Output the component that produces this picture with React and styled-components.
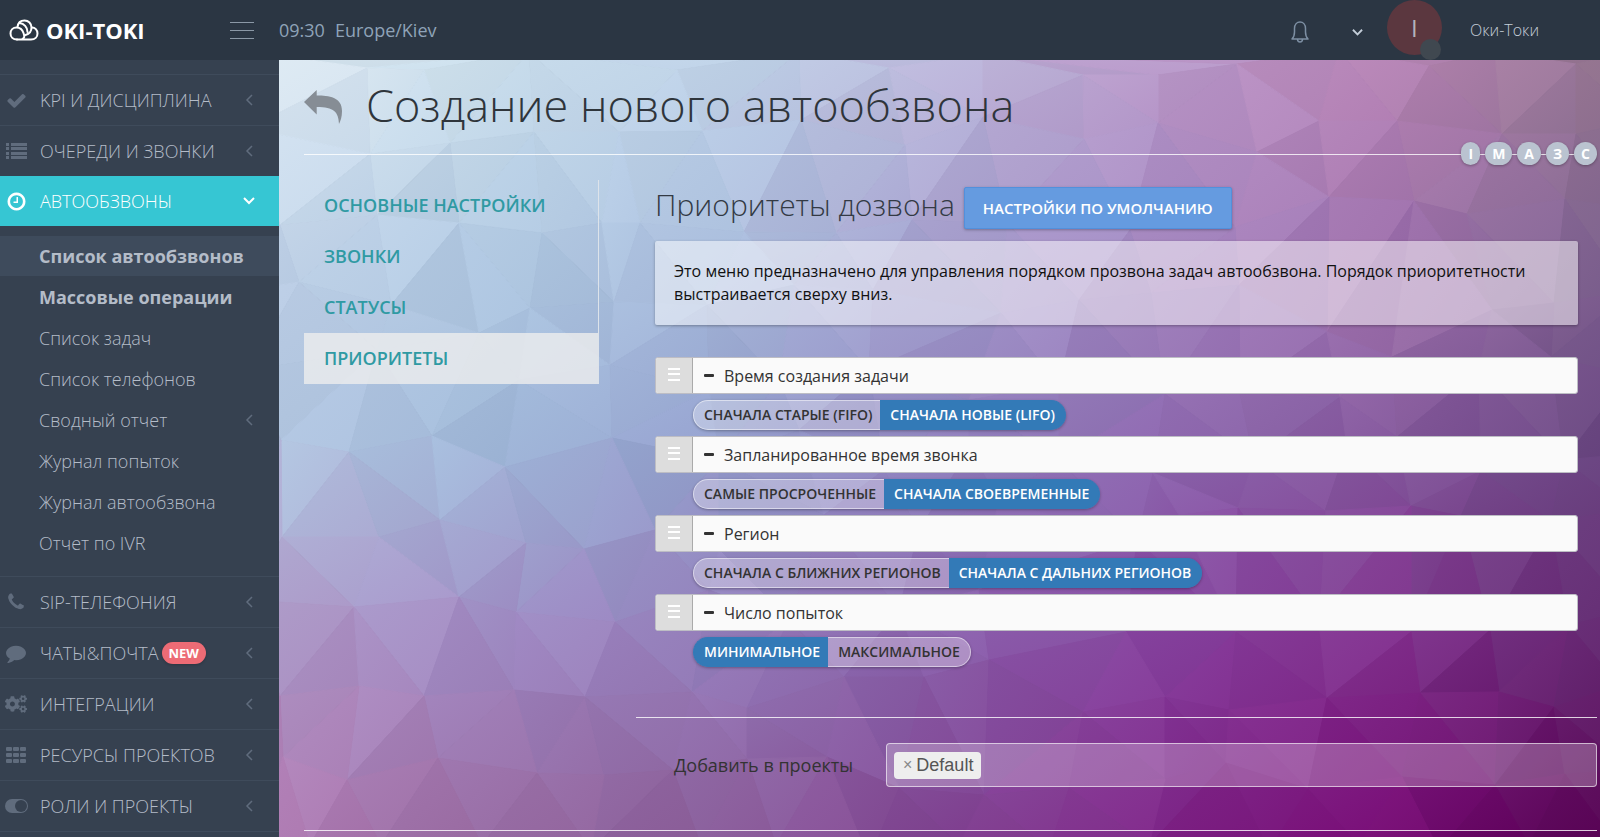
import { useState } from "react";
import styled, { createGlobalStyle } from "styled-components";
import { FaCogs } from "react-icons/fa";

const GlobalStyle = createGlobalStyle`
  * {
    box-sizing: border-box;
  }
  body {
    margin: 0;
    background: #364150;
    font-family: "Open Sans", "Noto Sans", sans-serif;
  }
  button {
    font-family: inherit;
    cursor: pointer;
  }
`;

/* ---------- polygonal background ---------- */

const W = 1321;
const H = 777;

// colours on a 7 x 5 grid, each triangle is filled from the blend around its centre
const colorGrid = [
  ["dde9f1", "cbdfec", "c1d4e9", "bdb9db", "b998c8", "ba86b7", "957690"],
  ["bfd1e7", "b0c8e1", "abbfde", "a6a1cf", "a486c0", "a272ae", "7f6490"],
  ["b1c4df", "9fb8d9", "929ecc", "8f80bd", "8c68ae", "865a9f", "684580"],
  ["b096c7", "9f88c2", "947cba", "8a62ac", "87419f", "81308d", "652a72"],
  ["b07ab2", "96689f", "8c5e9a", "804290", "7f2587", "790a75", "540050"],
].map((row) => row.map((hex) => [0, 2, 4].map((i) => parseInt(hex.slice(i, i + 2), 16))));

const meshRows = [
  [-40, -10, 88, 8, 145, 10, 250, -8, 398, 10, 520, -8, 610, 8, 704, -6, 804, 15, 879, 15, 958, 4, 1060, -10, 1150, 6, 1216, -8, 1297, 4, 1360, -10],
  [-30, 68, 91, 94, 171, 83, 255, 72, 340, 72, 423, 71, 522, 60, 626, 85, 704, 57, 805, 79, 879, 63, 978, 92, 1040, 61, 1118, 61, 1223, 74, 1297, 74, 1360, 60],
  [1, 165, 98, 155, 180, 163, 263, 173, 323, 163, 361, 163, 465, 172, 557, 173, 633, 160, 728, 163, 851, 170, 956, 167, 1050, 137, 1135, 141, 1188, 154, 1286, 139, 1360, 150],
  [-30, 230, 20, 222, 112, 245, 251, 248, 335, 242, 428, 245, 515, 225, 594, 230, 722, 253, 800, 240, 872, 233, 960, 225, 1048, 272, 1213, 250, 1275, 243, 1350, 232],
  [-30, 310, 98, 290, 200, 273, 240, 320, 331, 305, 430, 330, 500, 320, 590, 310, 690, 340, 780, 325, 886, 334, 961, 334, 1061, 337, 1113, 297, 1200, 310, 1272, 297, 1350, 315],
  [2, 380, 70, 392, 153, 376, 226, 407, 333, 378, 440, 400, 520, 370, 605, 410, 690, 390, 780, 400, 874, 413, 975, 400, 1068, 386, 1118, 377, 1202, 411, 1285, 400, 1350, 394],
  [3, 477, 100, 477, 161, 460, 247, 483, 305, 489, 376, 470, 440, 490, 545, 455, 640, 470, 720, 440, 858, 480, 900, 455, 959, 448, 1046, 451, 1132, 446, 1182, 456, 1272, 461, 1350, 450],
  [-30, 540, 75, 547, 180, 537, 237, 552, 336, 562, 430, 530, 510, 560, 620, 550, 700, 530, 847, 572, 957, 572, 1040, 560, 1132, 572, 1211, 570, 1290, 565, 1350, 550],
  [1, 636, 80, 626, 145, 636, 235, 630, 306, 637, 413, 632, 468, 648, 565, 617, 645, 617, 710, 600, 804, 652, 886, 637, 950, 650, 1048, 638, 1141, 633, 1220, 632, 1275, 647, 1340, 625],
  [4, 697, 68, 720, 159, 698, 258, 713, 325, 715, 394, 710, 468, 699, 548, 697, 620, 728, 705, 735, 790, 728, 886, 719, 947, 703, 1029, 729, 1123, 717, 1216, 725, 1286, 714, 1350, 710],
  [-30, 800, 31, 785, 102, 785, 203, 785, 312, 790, 422, 785, 497, 785, 590, 800, 680, 785, 770, 790, 870, 785, 990, 790, 1080, 785, 1160, 790, 1250, 785, 1350, 800],
];

const points = meshRows.flatMap((row) => row.filter((_, i) => i % 2 === 0).map((x, i) => [x, row[i * 2 + 1]]));

const circumcircle = (pts, [i, j, k]) => {
  const [ax, ay] = pts[i];
  const [bx, by] = pts[j];
  const [cx, cy] = pts[k];
  const d = 2 * (ax * (by - cy) + bx * (cy - ay) + cx * (ay - by));
  const a = ax * ax + ay * ay;
  const b = bx * bx + by * by;
  const c = cx * cx + cy * cy;
  const x = (a * (by - cy) + b * (cy - ay) + c * (ay - by)) / d;
  const y = (a * (cx - bx) + b * (ax - cx) + c * (bx - ax)) / d;
  return { ids: [i, j, k], x, y, r: (ax - x) ** 2 + (ay - y) ** 2 };
};

const triangulate = (source) => {
  const n = source.length;
  const pts = [...source, [-9000, -9000], [10000, -9000], [600, 12000]];
  let triangles = [circumcircle(pts, [n, n + 1, n + 2])];
  for (let p = 0; p < n; p++) {
    const [px, py] = pts[p];
    const edges = new Map();
    triangles = triangles.filter((t) => {
      if ((t.x - px) ** 2 + (t.y - py) ** 2 >= t.r) return true;
      const [i, j, k] = t.ids;
      [[i, j], [j, k], [k, i]].forEach((edge) => {
        const key = [...edge].sort((a, b) => a - b).join("-");
        edges.has(key) ? edges.delete(key) : edges.set(key, edge);
      });
      return false;
    });
    edges.forEach(([i, j]) => triangles.push(circumcircle(pts, [i, j, p])));
  }
  return triangles.filter((t) => t.ids.every((id) => id < n)).map((t) => t.ids.map((id) => pts[id]));
};

const colorAt = (x, y, shade) => {
  const gx = Math.min(Math.max(x / W, 0), 1) * 6;
  const gy = Math.min(Math.max(y / H, 0), 1) * 4;
  const cx = Math.min(Math.floor(gx), 5);
  const cy = Math.min(Math.floor(gy), 3);
  const mix = (a, b, t) => a + (b - a) * t;
  const rgb = [0, 1, 2].map((i) => {
    const top = mix(colorGrid[cy][cx][i], colorGrid[cy][cx + 1][i], gx - cx);
    const bottom = mix(colorGrid[cy + 1][cx][i], colorGrid[cy + 1][cx + 1][i], gx - cx);
    return Math.round(mix(top, bottom, gy - cy) + shade);
  });
  return `rgb(${rgb.join(",")})`;
};

const facets = triangulate(points).map((t, index) => {
  const x = (t[0][0] + t[1][0] + t[2][0]) / 3;
  const y = (t[0][1] + t[1][1] + t[2][1]) / 3;
  const shade = ((index * 7) % 9) - 4;
  return {
    id: `facet-${index}`,
    path: t.map((p) => p.join(",")).join(" "),
    from: colorAt(x - 28, y - 28, shade),
    to: colorAt(x + 28, y + 28, shade),
  };
});

const Backdrop = () => (
  <BackdropSvg viewBox={`0 0 ${W} ${H}`} preserveAspectRatio="none" aria-hidden="true">
    {facets.map((f) => (
      <g key={f.id}>
        <linearGradient id={f.id} x1="0" y1="0" x2="1" y2="1">
          <stop offset="0" stopColor={f.from} />
          <stop offset="1" stopColor={f.to} />
        </linearGradient>
        <polygon points={f.path} fill={`url(#${f.id})`} stroke={`url(#${f.id})`} strokeWidth="1" />
      </g>
    ))}
  </BackdropSvg>
);

/* ---------- icons ---------- */

const CloudLogo = () => (
  <svg width="30" height="23" viewBox="0 0 30 23" fill="none" stroke="#fff" strokeWidth="2" strokeLinecap="round">
    <path d="M8 20.500C4 20.500 1.500 18 1.500 14.500C1.500 11 4 8.500 7.500 8.500C11 8.500 13.500 11 14.500 14C15.500 17 16 18.500 13.500 20" />
    <path d="M8 20.500H22C26 20.500 28.500 18 28.500 14.500C28.500 11 26 8.500 23 8.500" />
    <path d="M8.500 8C9 4 11.500 1.500 15.500 1.500C19.500 1.500 22.500 4.500 22.500 8.500C22.500 12.500 20 15 16.500 16" />
    <path d="M10.500 4C15 4.500 18.500 8 18.500 13" />
  </svg>
);

const CheckIcon = () => (
  <svg width="21" height="21" viewBox="0 0 1792 1792" fill="currentColor">
    <path d="M1671 566q0 40-28 68l-724 724-136 136q-28 28-68 28t-68-28l-136-136-362-362q-28-28-28-68t28-68l136-136q28-28 68-28t68 28l294 295 656-657q28-28 68-28t68 28l136 136q28 28 28 68z" />
  </svg>
);

const ListIcon = () => (
  <svg width="21" height="16" viewBox="0 0 21 16" fill="currentColor">
    {[0, 4, 9, 13].map((y) => (
      <g key={y}>
        <rect x="0" y={y} width="3" height="3" />
        <rect x="5" y={y} width="16" height="3" />
      </g>
    ))}
  </svg>
);

const ClockIcon = () => (
  <svg width="21" height="21" viewBox="0 0 1792 1792" fill="currentColor">
    <path d="M1024 544v448q0 14-9 23t-23 9h-320q-14 0-23-9t-9-23v-64q0-14 9-23t23-9h224v-352q0-14 9-23t23-9h64q14 0 23 9t9 23zm416 352q0-148-73-273t-198-198-273-73-273 73-198 198-73 273 73 273 198 198 273 73 273-73 198-198 73-273zm224 0q0 209-103 385.500t-279.500 279.500-385.500 103-385.500-103-279.500-279.500-103-385.500 103-385.500 279.500-279.500 385.500-103 385.500 103 279.500 279.500 103 385.500z" />
  </svg>
);

const PhoneIcon = () => (
  <svg width="20" height="20" viewBox="0 0 1792 1792" fill="currentColor">
    <path d="M1600 1240q0 27-10 70.500t-21 68.500q-21 50-122 106-94 51-186 51-27 0-53-3.500t-57.500-12.500-47-14.500-55.500-20.500-49-18q-98-35-175-83-127-79-264-216t-216-264q-48-77-83-175-3-9-18-49t-20.500-55.500-14.500-47-12.500-57.500-3.500-53q0-92 51-186 56-101 106-122 25-11 68.500-21t70.500-10q14 0 21 3 18 6 53 76 11 19 30 54t35 63.500 31 53.500q3 4 17.500 25t21.500 35.500 7 28.500q0 20-28.500 50t-62 55-62 53-28.500 46q0 9 5 22.500t8.500 20.500 14 24 11.500 19q76 137 174 235t235 174q2 1 19 11.500t24 14 20.500 8.500 22.500 5q18 0 46-28.500t53-62 55-62 50-28.500q14 0 28.500 7t35.500 21.500 25 17.500q25 15 53.500 31t63.500 35 54 30q70 35 76 53 3 7 3 21z" />
  </svg>
);

const CommentIcon = () => (
  <svg width="20" height="20" viewBox="0 0 1792 1792" fill="currentColor">
    <path d="M1792 896q0 174-120 321.500t-326 233-450 85.500q-70 0-145-8-198 175-460 242-49 14-114 22-17 2-30.500-9t-17.500-29v-1q-3-4-.5-12t2-10 4.500-9.500l6-9 7-8.500 8-9q7-8 31-34.500t34.500-38 31-39.500 32.500-51 27-59 26-76q-157-89-247.500-220t-90.500-281q0-174 120-321.500t326-233 450-85.500 450 85.500 326 233 120 321.500z" />
  </svg>
);

const GridIcon = () => (
  <svg width="20" height="16" viewBox="0 0 20 16" fill="currentColor">
    {[0, 6, 12].map((y) => [0, 7, 14].map((x) => <rect key={`${x}-${y}`} x={x} y={y} width="6" height="4" rx="1" />))}
  </svg>
);

const ToggleIcon = () => (
  <svg width="23" height="14" viewBox="0 0 23 14">
    <rect width="23" height="14" rx="7" fill="currentColor" />
    <circle cx="16" cy="7" r="6" fill="#364150" />
  </svg>
);

const Chevron = ({ down, size = 12 }) => (
  <svg width={size} height={size} viewBox="0 0 12 12" fill="none" stroke="currentColor" strokeWidth={down ? 2 : 1.5}>
    <path d={down ? "M1 3L6 8L11 3" : "M9 1L4 6L9 11"} />
  </svg>
);

const BellIcon = () => (
  <svg width="18" height="22" viewBox="0 0 18 22" fill="none" stroke="#7d8fa3" strokeWidth="1.5" strokeLinejoin="round">
    <path d="M1 18C3 16 3.500 14 3.500 11V7.500C3.500 3.500 6 1 9 1C12 1 14.500 3.500 14.500 7.500V11C14.500 14 15 16 17 18Z" />
    <path d="M6.500 18C6.500 20 7.500 21 9 21C10.500 21 11.500 20 11.500 18" />
  </svg>
);

const ReplyIcon = () => (
  <svg width="38" height="34" viewBox="0 0 38 34" fill="#868d95">
    <path d="M0 12L12.700 0V5.500C25 5.500 38 7 38 21C38 27 36.500 31 35 34C34.500 22 30 17 12.700 17V24.500Z" />
  </svg>
);

const GripIcon = () => (
  <svg width="12" height="13" viewBox="0 0 12 13" fill="#fff">
    <rect width="12" height="2" />
    <rect y="5" width="12" height="2" />
    <rect y="11" width="12" height="2" />
  </svg>
);

/* ---------- data ---------- */

const topMenu = [
  { label: "KPI И ДИСЦИПЛИНА", icon: <CheckIcon /> },
  { label: "ОЧЕРЕДИ И ЗВОНКИ", icon: <ListIcon /> },
  { label: "АВТООБЗВОНЫ", icon: <ClockIcon />, active: true },
];

const subMenu = [
  { label: "Список автообзвонов", bold: true, active: true },
  { label: "Массовые операции", bold: true },
  { label: "Список задач" },
  { label: "Список телефонов" },
  { label: "Сводный отчет", nested: true },
  { label: "Журнал попыток" },
  { label: "Журнал автообзвона" },
  { label: "Отчет по IVR" },
];

const bottomMenu = [
  { label: "SIP-ТЕЛЕФОНИЯ", icon: <PhoneIcon /> },
  { label: "ЧАТЫ&ПОЧТА", icon: <CommentIcon />, badge: "NEW" },
  { label: "ИНТЕГРАЦИИ", icon: <FaCogs size={22} /> },
  { label: "РЕСУРСЫ ПРОЕКТОВ", icon: <GridIcon /> },
  { label: "РОЛИ И ПРОЕКТЫ", icon: <ToggleIcon /> },
];

const tabs = ["ОСНОВНЫЕ НАСТРОЙКИ", "ЗВОНКИ", "СТАТУСЫ", "ПРИОРИТЕТЫ"];

const priorities = [
  { title: "Время создания задачи", options: ["СНАЧАЛА СТАРЫЕ (FIFO)", "СНАЧАЛА НОВЫЕ (LIFO)"], value: 1 },
  { title: "Запланированное время звонка", options: ["САМЫЕ ПРОСРОЧЕННЫЕ", "СНАЧАЛА СВОЕВРЕМЕННЫЕ"], value: 1 },
  { title: "Регион", options: ["СНАЧАЛА С БЛИЖНИХ РЕГИОНОВ", "СНАЧАЛА С ДАЛЬНИХ РЕГИОНОВ"], value: 1 },
  { title: "Число попыток", options: ["МИНИМАЛЬНОЕ", "МАКСИМАЛЬНОЕ"], value: 0 },
];

/* ---------- parts ---------- */

const MenuEntry = ({ item }) => (
  <MenuItem $active={item.active}>
    <MenuLink href="#" $active={item.active}>
      <MenuIcon $active={item.active}>{item.icon}</MenuIcon>
      {item.label}
      {item.badge && <NewBadge>{item.badge}</NewBadge>}
      <MenuArrow $active={item.active}>
        <Chevron down={item.active} />
      </MenuArrow>
    </MenuLink>
  </MenuItem>
);

const Priority = ({ item }) => {
  const [value, setValue] = useState(item.value);
  return (
    <PriorityItem>
      <PriorityBar>
        <Grip type="button" aria-label="Переместить">
          <GripIcon />
        </Grip>
        <PriorityTitle>
          <Minus />
          {item.title}
        </PriorityTitle>
      </PriorityBar>
      <Switcher>
        {item.options.map((option, i) => (
          <SwitchButton key={option} type="button" $active={i === value} aria-pressed={i === value} onClick={() => setValue(i)}>
            {option}
          </SwitchButton>
        ))}
      </Switcher>
    </PriorityItem>
  );
};

export default function App() {
  const [selectedTab, setSelectedTab] = useState("ПРИОРИТЕТЫ");
  const [projects, setProjects] = useState(["Default"]);

  return (
    <Page>
      <GlobalStyle />
      <Header>
        <Brand>
          <Logo href="#">
            <CloudLogo />
            OKI-TOKI
          </Logo>
          <MenuToggle type="button" aria-label="Меню">
            <span />
            <span />
            <span />
          </MenuToggle>
        </Brand>
        <Clock>
          <span>09:30</span>
          <span>Europe/Kiev</span>
        </Clock>
        <UserBar>
          <IconButton type="button" aria-label="Уведомления">
            <BellIcon />
          </IconButton>
          <IconButton type="button" aria-label="Открыть список">
            <Chevron down size={11} />
          </IconButton>
          <Avatar>
            I
            <Status />
          </Avatar>
          <UserName>Оки-Токи</UserName>
        </UserBar>
      </Header>
      <Body>
        <Sidebar>
          <MenuList>
            {topMenu.map((item) => (
              <MenuEntry key={item.label} item={item} />
            ))}
          </MenuList>
          <SubMenu>
            {subMenu.map((item) => (
              <li key={item.label}>
                <SubLink href="#" $bold={item.bold} $active={item.active}>
                  {item.label}
                  {item.nested && (
                    <MenuArrow>
                      <Chevron />
                    </MenuArrow>
                  )}
                </SubLink>
              </li>
            ))}
          </SubMenu>
          <MenuList $last>
            {bottomMenu.map((item) => (
              <MenuEntry key={item.label} item={item} />
            ))}
          </MenuList>
        </Sidebar>
        <Main>
          <Backdrop />
          <TitleBar>
            <BackLink href="#" aria-label="Назад">
              <ReplyIcon />
            </BackLink>
            <Title>Создание нового автообзвона</Title>
            <Letters>
              {["I", "М", "А", "З", "С"].map((letter) => (
                <Letter key={letter}>{letter}</Letter>
              ))}
            </Letters>
          </TitleBar>
          <Content>
            <Tabs>
              {tabs.map((tab) => (
                <Tab key={tab} type="button" $active={tab === selectedTab} onClick={() => setSelectedTab(tab)}>
                  {tab}
                </Tab>
              ))}
            </Tabs>
            <Panel>
              <Settings>
                <PanelHead>
                  <PanelTitle>Приоритеты дозвона</PanelTitle>
                  <DefaultsButton type="button">НАСТРОЙКИ ПО УМОЛЧАНИЮ</DefaultsButton>
                </PanelHead>
                <Note>Это меню предназначено для управления порядком прозвона задач автообзвона. Порядок приоритетности выстраивается сверху вниз.</Note>
                <PriorityList>
                  {priorities.map((item) => (
                    <Priority key={item.title} item={item} />
                  ))}
                </PriorityList>
              </Settings>
              <ProjectRow>
                <ProjectLabel htmlFor="projects">Добавить в проекты</ProjectLabel>
                <TagBox>
                  {projects.map((project) => (
                    <Tag key={project}>
                      <TagRemove type="button" aria-label={`Убрать ${project}`} onClick={() => setProjects(projects.filter((p) => p !== project))}>
                        ×
                      </TagRemove>
                      {project}
                    </Tag>
                  ))}
                  <TagInput id="projects" type="text" />
                </TagBox>
              </ProjectRow>
            </Panel>
          </Content>
        </Main>
      </Body>
    </Page>
  );
}

/* ---------- styles ---------- */

const Page = styled.div`
  display: flex;
  flex-direction: column;
  min-height: 100vh;
`;

const Header = styled.header`
  display: flex;
  align-items: center;
  height: 60px;
  background: #2b3643;
`;

const Brand = styled.div`
  display: flex;
  align-items: center;
  justify-content: space-between;
  width: 279px;
  padding: 0 25px 0 9px;
`;

const Logo = styled.a`
  display: flex;
  align-items: center;
  gap: 7px;
  color: #fff;
  font-size: 22px;
  font-weight: 700;
  text-decoration: none;
`;

const MenuToggle = styled.button`
  display: flex;
  flex-direction: column;
  gap: 7px;
  padding: 0;
  border: 0;
  background: none;
  span {
    width: 24px;
    height: 1px;
    background: #8b98a6;
  }
`;

const Clock = styled.div`
  display: flex;
  gap: 10px;
  flex: 1;
  color: #8fa3b8;
  font-size: 18px;
`;

const UserBar = styled.div`
  display: flex;
  align-items: center;
  height: 60px;
  padding-right: 61px;
`;

const IconButton = styled.button`
  display: flex;
  align-items: center;
  justify-content: center;
  width: 58px;
  height: 60px;
  padding: 4px 0 0;
  border: 0;
  background: none;
  color: #c3cdd8;
`;

const Avatar = styled.div`
  position: relative;
  align-self: flex-start;
  width: 55px;
  height: 55px;
  border-radius: 50%;
  background: #5b373f;
  color: #b3b3bd;
  font-size: 24px;
  line-height: 55px;
  text-align: center;
`;

const Status = styled.span`
  position: absolute;
  right: 1px;
  bottom: -5px;
  width: 21px;
  height: 21px;
  border-radius: 50%;
  background: #404850;
`;

const UserName = styled.span`
  margin-left: 28px;
  color: #c6cfda;
  font-size: 16px;
  font-weight: 300;
`;

const Body = styled.div`
  display: flex;
  flex: 1;
`;

const Sidebar = styled.nav`
  flex: 0 0 279px;
  padding-top: 14px;
  background: #364150;
  color: #b4bcc8;
`;

const MenuList = styled.ul`
  margin: 0;
  padding: 0;
  list-style: none;
  border-bottom: ${(props) => (props.$last ? "1px solid #3f4b5b" : "0")};
`;

const MenuItem = styled.li`
  border-top: ${(props) => (props.$active ? "0" : "1px solid #3f4b5b")};
`;

const MenuLink = styled.a`
  display: flex;
  align-items: center;
  height: 50px;
  padding: 0 24px 0 4px;
  background: ${(props) => (props.$active ? "#36c6d3" : "none")};
  color: ${(props) => (props.$active ? "#fff" : "#b4bcc8")};
  font-size: 18px;
  font-weight: 300;
  text-decoration: none;
`;

const MenuIcon = styled.span`
  display: flex;
  justify-content: center;
  width: 24px;
  margin-right: 12px;
  color: ${(props) => (props.$active ? "#fff" : "#606c7d")};
  svg {
    flex: none;
  }
`;

const MenuArrow = styled.span`
  display: flex;
  margin-left: auto;
  color: ${(props) => (props.$active ? "#fff" : "#606c7d")};
`;

const NewBadge = styled.span`
  height: 22px;
  margin-left: 3px;
  padding: 0 7px;
  border-radius: 11px;
  background: #ed6b75;
  color: #fff;
  font-size: 13px;
  font-weight: 700;
  line-height: 22px;
  box-shadow: 0 1px 3px rgba(0, 0, 0, 0.2);
`;

const SubMenu = styled.ul`
  display: grid;
  gap: 1px;
  margin: 0;
  padding: 10px 0 13px;
  list-style: none;
`;

const SubLink = styled.a`
  display: flex;
  align-items: center;
  height: 40px;
  padding: 0 24px 0 39px;
  background: ${(props) => (props.$active ? "#3e4b5c" : "none")};
  color: #b4bcc8;
  font-size: 18px;
  font-weight: ${(props) => (props.$bold ? 700 : 300)};
  text-decoration: none;
`;

const Main = styled.main`
  position: relative;
  z-index: 0;
  flex: 1;
  min-width: 0;
  padding: 0 3px 6px 25px;
  overflow: hidden;
`;

const BackdropSvg = styled.svg`
  position: absolute;
  inset: 0;
  z-index: -1;
  width: 100%;
  height: 100%;
`;

const TitleBar = styled.div`
  position: relative;
  display: flex;
  align-items: center;
  gap: 24px;
  height: 95px;
  border-bottom: 1px solid rgba(255, 255, 255, 0.8);
`;

const BackLink = styled.a`
  display: flex;
`;

const Title = styled.h1`
  margin: 0;
  padding-bottom: 4px;
  color: #2f353b;
  font-size: 45px;
  font-weight: 300;
  line-height: 60px;
`;

const Letters = styled.div`
  position: absolute;
  right: 0;
  bottom: -11px;
  display: flex;
  gap: 5px;
`;

const Letter = styled.span`
  padding: 0 7px;
  border-radius: 12px;
  background: #bac3d0;
  color: #fff;
  font-size: 14px;
  font-weight: 700;
  line-height: 23px;
  box-shadow: 0 1px 3px rgba(0, 0, 0, 0.3);
`;

const Content = styled.div`
  display: flex;
  align-items: flex-start;
  gap: 37px;
  padding-top: 25px;
  border-bottom: 1px solid rgba(255, 255, 255, 0.8);
`;

const Tabs = styled.div`
  display: flex;
  flex-direction: column;
  flex: 0 0 295px;
  border-right: 1px solid #dde3ea;
`;

const Tab = styled.button`
  height: 51px;
  padding: 0 20px 1px;
  border: 0;
  background: ${(props) => (props.$active ? "rgba(238, 238, 238, 0.8)" : "none")};
  color: #2f9aa3;
  font-size: 18px;
  font-weight: 600;
  text-align: left;
`;

const Panel = styled.section`
  flex: 1;
  min-width: 0;
`;

const Settings = styled.div`
  padding: 7px 19px 50px;
  border-bottom: 1px solid rgba(255, 255, 255, 0.8);
`;

const PanelHead = styled.div`
  display: flex;
  align-items: flex-start;
  gap: 9px;
`;

const PanelTitle = styled.h2`
  margin: 0;
  color: #333a44;
  font-size: 30px;
  font-weight: 300;
  line-height: 36px;
`;

const DefaultsButton = styled.button`
  height: 42px;
  padding: 0 18px;
  border: 1px solid #5290dc;
  border-radius: 2px;
  background: #659be0;
  color: #fff;
  font-size: 15px;
  font-weight: 600;
  box-shadow: 0 1px 3px rgba(0, 0, 0, 0.3);
`;

const Note = styled.p`
  margin: 12px 0 32px;
  padding: 19px 19px;
  border-radius: 2px;
  background: rgba(255, 255, 255, 0.5);
  color: #111;
  font-size: 16px;
  line-height: 23px;
  box-shadow: 0 1px 3px rgba(0, 0, 0, 0.3);
`;

const PriorityList = styled.ul`
  display: grid;
  gap: 6px;
  margin: 0;
  padding: 0;
  list-style: none;
`;

const PriorityItem = styled.li`
  display: flex;
  flex-direction: column;
  align-items: flex-start;
  gap: 6px;
`;

const PriorityBar = styled.div`
  display: flex;
  width: 100%;
  height: 37px;
  border: 1px solid #bdbdc4;
  border-radius: 3px;
  background: #fafafa;
`;

const Grip = styled.button`
  display: flex;
  align-items: center;
  justify-content: center;
  width: 37px;
  padding: 0 0 2px;
  border: 0;
  border-right: 1px solid #aaa;
  border-radius: 2px 0 0 2px;
  background: #ddd;
`;

const PriorityTitle = styled.div`
  display: flex;
  align-items: center;
  gap: 10px;
  padding-left: 11px;
  color: #333;
  font-size: 16px;
`;

const Minus = styled.span`
  width: 10px;
  height: 3px;
  border-radius: 1px;
  background: #333;
`;

const Switcher = styled.div`
  display: flex;
  margin-left: 38px;
  border-radius: 15px;
  box-shadow: 0 1px 3px rgba(0, 0, 0, 0.3);
`;

const SwitchButton = styled.button`
  height: 30px;
  padding: 0 10px 1px;
  border: 1px solid ${(props) => (props.$active ? "#337ab7" : "rgba(255, 255, 255, 0.5)")};
  background: ${(props) => (props.$active ? "#337ab7" : "rgba(255, 255, 255, 0.3)")};
  color: ${(props) => (props.$active ? "#fff" : "#333")};
  font-size: 14px;
  font-weight: 600;
  &:first-child {
    padding-right: 8px;
    border-right: 0;
    border-radius: 15px 0 0 15px;
  }
  &:last-child {
    border-left: 0;
    border-radius: 0 15px 15px 0;
  }
`;

const ProjectRow = styled.div`
  display: flex;
  align-items: center;
  padding: 25px 0 43px 38px;
`;

const ProjectLabel = styled.label`
  width: 212px;
  color: #333;
  font-size: 18px;
`;

const TagBox = styled.div`
  display: flex;
  align-items: center;
  flex: 1;
  height: 44px;
  padding: 0 7px;
  border: 1px solid rgba(255, 255, 255, 0.6);
  border-radius: 4px;
  background: rgba(255, 255, 255, 0.25);
`;

const Tag = styled.span`
  display: flex;
  align-items: center;
  gap: 4px;
  height: 27px;
  padding: 0 8px 0 9px;
  border-radius: 4px;
  background: #eee;
  color: #555;
  font-family: "Liberation Sans", Arial, sans-serif;
  font-size: 18px;
`;

const TagRemove = styled.button`
  padding: 0;
  border: 0;
  background: none;
  color: #888;
  font-size: 16px;
`;

const TagInput = styled.input`
  flex: 1;
  min-width: 0;
  border: 0;
  outline: 0;
  background: none;
  font-size: 18px;
`;
